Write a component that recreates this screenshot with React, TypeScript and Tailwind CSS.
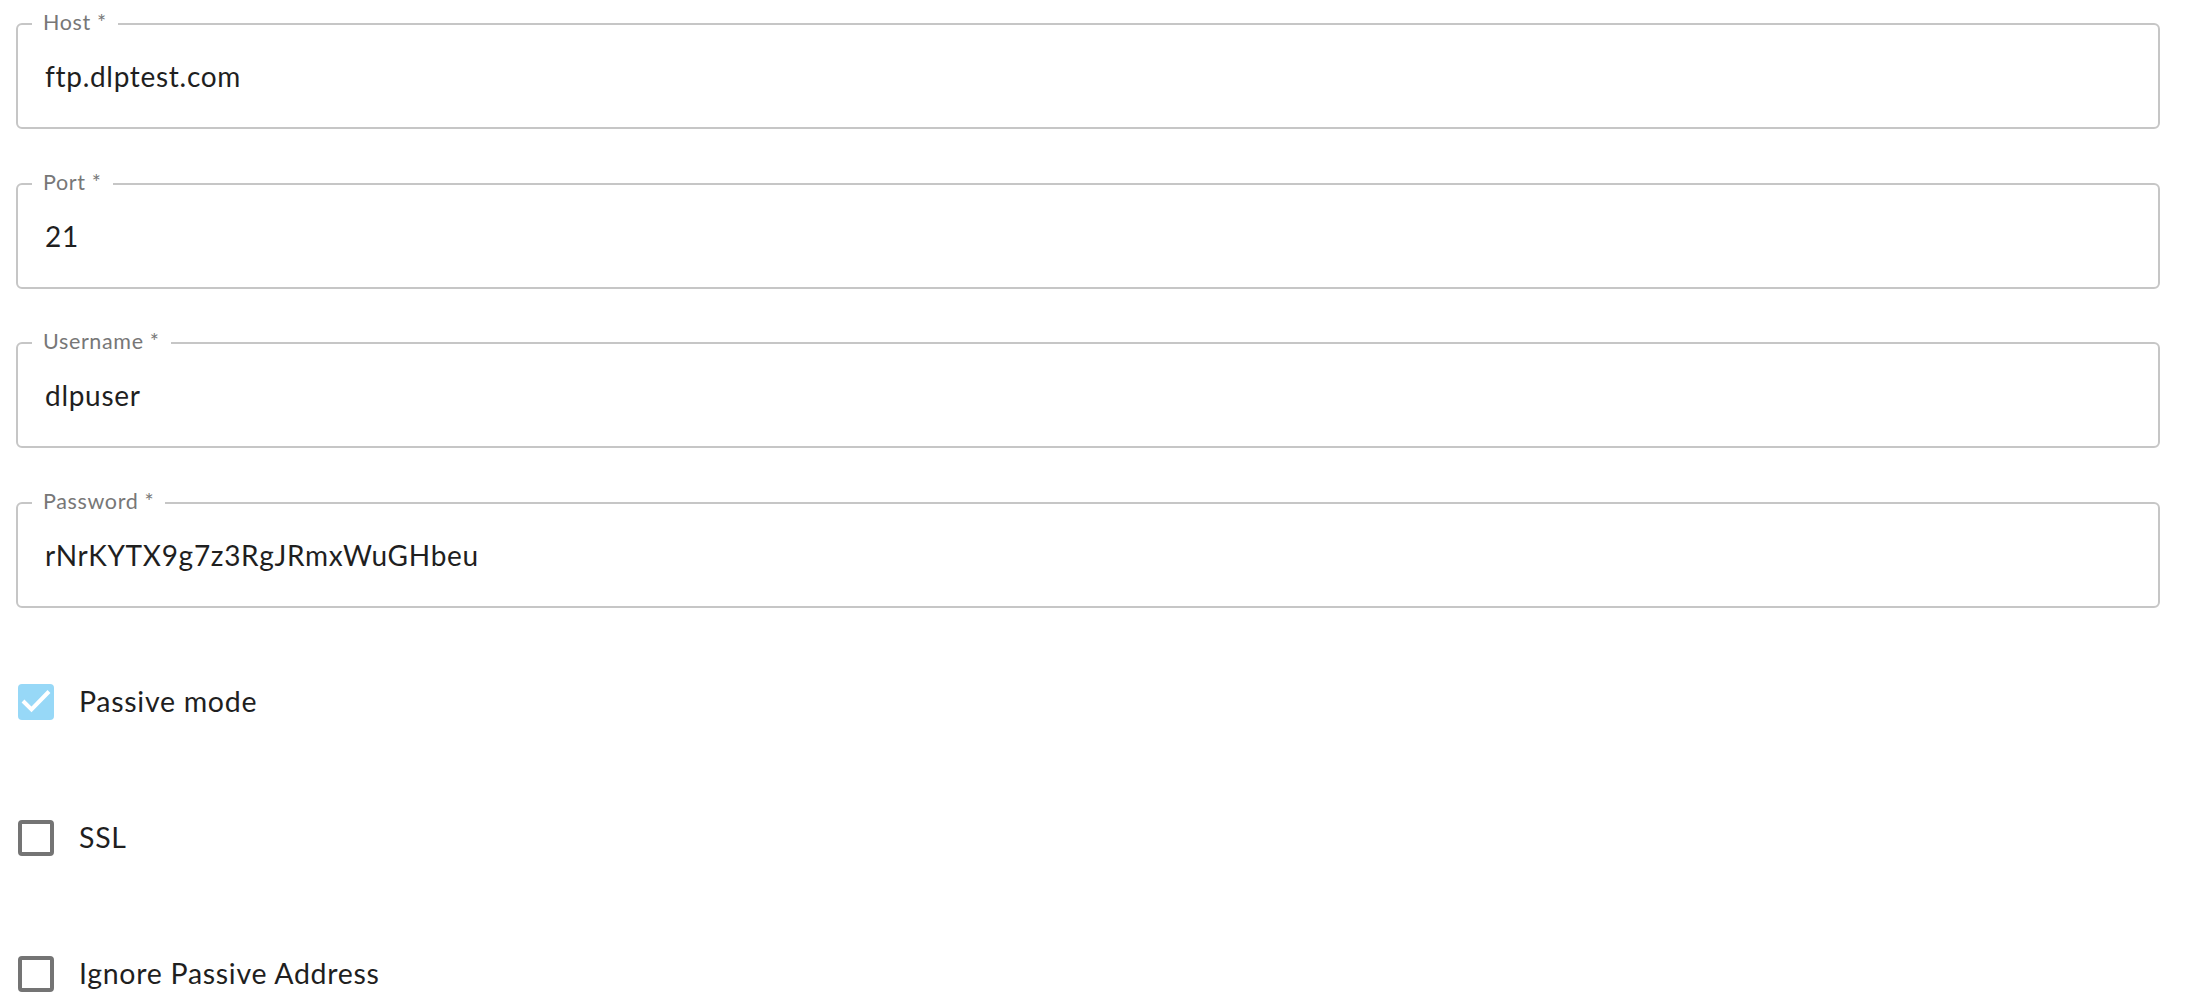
import React from 'react';

const FONT = "font-['Lato','Noto_Sans',sans-serif]";

const fields = [
  { label: 'Host', value: 'ftp.dlptest.com' },
  { label: 'Port', value: '21' },
  { label: 'Username', value: 'dlpuser' },
  { label: 'Password', value: 'rNrKYTX9g7z3RgJRmxWuGHbeu' },
];

const options = [
  { label: 'Passive mode', checked: true },
  { label: 'SSL', checked: false },
  { label: 'Ignore Passive Address', checked: false },
];

function OutlinedField({ label, value }: { label: string; value: string }) {
  return (
    <div className="relative">
      <div className="flex h-[106px] items-center rounded-[6px] border-2 border-[#c6c6c6] px-[27px] text-[28px] tracking-[0.025em] text-[#1f1f1f]">
        {value}
      </div>
      {/* notched label sitting on the top border */}
      <span className="absolute left-[16px] top-[-13px] bg-white px-[11px] text-[21.5px] leading-[24px] tracking-[0.03em] text-[#777777]">
        {label} *
      </span>
    </div>
  );
}

function CheckRow({ label, checked }: { label: string; checked: boolean }) {
  return (
    <label className="flex h-[36px] items-center">
      {checked ? (
        <span className="ml-[2px] flex h-[36px] w-[36px] items-center justify-center rounded-[4px] bg-[#97d8f7]">
          <svg viewBox="0 0 36 36" className="h-[36px] w-[36px]" fill="none">
            <path d="M5 17l8.5 8.5L31 7.5" stroke="white" strokeWidth="4" />
          </svg>
        </span>
      ) : (
        <span className="ml-[2px] h-[36px] w-[36px] rounded-[4px] border-[4px] border-[#747474]" />
      )}
      <span className="ml-[25px] text-[28.5px] tracking-[0.025em] text-[#1f1f1f]">{label}</span>
    </label>
  );
}

export default function App() {
  return (
    <div className={`${FONT} min-h-screen bg-white pl-[16px] pr-[28px] pt-[23px]`}>
      <div className="flex flex-col gap-[53.5px]">
        {fields.map((f) => (
          <OutlinedField key={f.label} label={f.label} value={f.value} />
        ))}
      </div>
      <div className="mt-[76px] flex flex-col gap-[100px]">
        {options.map((o) => (
          <CheckRow key={o.label} label={o.label} checked={o.checked} />
        ))}
      </div>
    </div>
  );
}
